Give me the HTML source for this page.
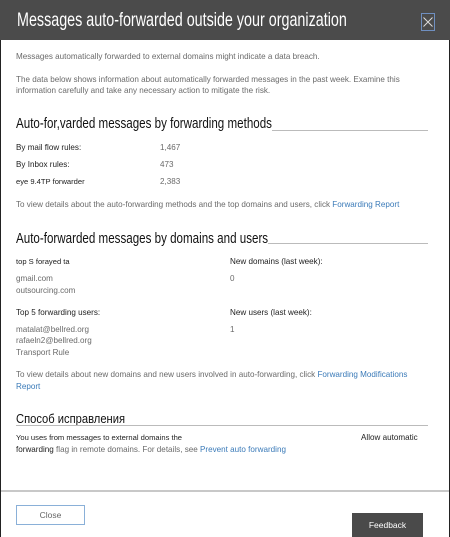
<!DOCTYPE html>
<html><head><meta charset="utf-8"><style>
*{margin:0;padding:0;box-sizing:border-box}
body{width:450px;height:537px;overflow:hidden;background:#fff;font-family:"Liberation Sans","Noto Sans CJK SC",sans-serif;position:relative}
.frame{position:absolute;left:0;top:0;width:450px;height:537px;border:1px solid #222;border-bottom:none}
.hdr{position:absolute;left:0;top:0;width:450px;height:40px;background:#4b4b4b}
.title{position:absolute;left:17px;top:9px;color:#fff;font-size:19.5px;white-space:nowrap;transform:scaleX(0.735);transform-origin:left top}
.x{position:absolute;left:421px;top:13px;width:14px;height:18px;border:1px solid #6f8fc0}
.t{position:absolute;font-size:8.1px;color:#6a6a6a;white-space:nowrap}
.b{color:#222}
.a{color:#3a7ab8}
.h{position:absolute;left:16px;font-size:14.5px;color:#111;white-space:nowrap;transform:scaleX(0.8);transform-origin:left top}
.ln{position:absolute;left:16px;width:412px;height:1px;background:#bbb}
.sep{position:absolute;left:1px;width:448px;top:490px;height:2px;background:#c8c8c8}
.close{position:absolute;left:16px;top:505px;width:69px;height:20px;border:1px solid #8ab0d8;font-size:8.5px;color:#666;text-align:center;line-height:18px}
.fb{position:absolute;left:352px;top:513px;width:71px;height:24px;background:#4a4a4a;color:#fff;font-size:8.5px;text-align:center;line-height:24px}
</style></head><body>
<div class="frame"></div>
<div class="hdr"></div>
<div class="title">Messages auto-forwarded outside your organization</div>
<div class="x"><svg width="12" height="16" viewBox="0 0 12 16"><path d="M1.5 3.5L10.5 12.5M10.5 3.5L1.5 12.5" stroke="#ddd" stroke-width="1"/></svg></div>
<div class="t" style="left:16px;top:52px">Messages automatically forwarded to external domains might indicate a data breach.</div>
<div class="t" style="left:16px;top:75px">The data below shows information about automatically forwarded messages in the past week. Examine this</div>
<div class="t" style="left:16px;top:86px">information carefully and take any necessary action to mitigate the risk.</div>
<div class="h" style="top:116px">Auto-for,varded messages by forwarding methods</div>
<div class="ln" style="left:272px;width:156px;top:130px"></div>
<div class="t b" style="left:16px;top:143px">By mail flow rules:</div><div class="t" style="left:160px;top:143px">1,467</div>
<div class="t b" style="left:16px;top:160px">By Inbox rules:</div><div class="t" style="left:160px;top:160px">473</div>
<div class="t b" style="left:16px;top:177px;font-size:7.6px">eye 9.4TP forwarder</div><div class="t" style="left:160px;top:177px">2,383</div>
<div class="t" style="left:16px;top:200px">To view details about the auto-forwarding methods and the top domains and users, click <span class="a">Forwarding Report</span></div>
<div class="h" style="top:231px">Auto-forwarded messages by domains and users</div>
<div class="ln" style="left:268px;width:160px;top:243px"></div>
<div class="t b" style="left:16px;top:257px;font-size:7.6px">top S forayed ta</div><div class="t b" style="left:230px;top:257px">New domains (last week):</div>
<div class="t" style="left:16px;top:274px">gmail.com</div><div class="t" style="left:230px;top:274px">0</div>
<div class="t" style="left:16px;top:286px">outsourcing.com</div>
<div class="t b" style="left:16px;top:308px">Top 5 forwarding users:</div><div class="t b" style="left:230px;top:308px">New users (last week):</div>
<div class="t" style="left:16px;top:325px">matalat@bellred.org</div><div class="t" style="left:230px;top:325px">1</div>
<div class="t" style="left:16px;top:336px">rafaeln2@bellred.org</div>
<div class="t" style="left:16px;top:348px">Transport Rule</div>
<div class="t" style="left:16px;top:370px">To view details about new domains and new users involved in auto-forwarding, click <span class="a">Forwarding Modifications</span></div>
<div class="t a" style="left:16px;top:382px">Report</div>
<div class="h" style="top:411px;font-size:13px;transform:scaleX(0.86)">Способ исправления</div>
<div class="ln" style="top:425px"></div>
<div class="t b" style="left:16px;top:433px;font-size:7.6px">You uses from messages to external domains the</div>
<div class="t b" style="left:361px;top:433px">Allow automatic</div>
<div class="t" style="left:16px;top:445px"><span class="b">forwarding</span> flag in remote domains. For details, see <span class="a">Prevent auto forwarding</span></div>
<div class="sep"></div>
<div class="close">Close</div>
<div class="fb">Feedback</div>
</body></html>
